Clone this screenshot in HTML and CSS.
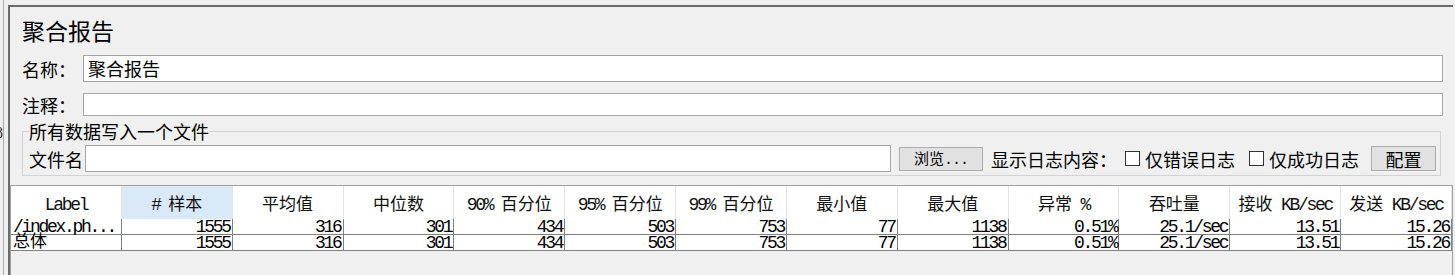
FILE: index.html
```html
<!DOCTYPE html>
<html lang="zh-CN">
<head>
<meta charset="utf-8">
<title>聚合报告</title>
<link rel="stylesheet" href="styles.css">
</head>
<body>
<div class="side"><span class="side-glyph">8</span></div>
<div class="panel">
  <div class="form">
    <div class="title">聚合报告</div>
    <div class="row row-name"><span class="lbl">名称：</span><div class="field field-tall">聚合报告</div></div>
    <div class="row row-comment"><span class="lbl">注释：</span><div class="field field-short"></div></div>
    <fieldset class="group">
      <legend>所有数据写入一个文件</legend>
      <div class="file-row">
        <span class="lbl-file">文件名</span>
        <div class="field file-input"></div>
        <button class="btn btn-browse">浏览<span class="dots">...</span></button>
        <span class="txt show-log">显示日志内容：</span>
        <span class="chk"></span><span class="txt chk-lbl">仅错误日志</span>
        <span class="chk chk2"></span><span class="txt chk-lbl">仅成功日志</span>
        <button class="btn btn-config">配置</button>
      </div>
    </fieldset>
  </div>
  <div class="table-pane">
    <div class="grid">
      <div class="h"><span class="lat">Label</span></div>
      <div class="h sel"><span class="lat"># </span>样本</div>
      <div class="h">平均值</div>
      <div class="h">中位数</div>
      <div class="h"><span class="lat">90% </span>百分位</div>
      <div class="h"><span class="lat">95% </span>百分位</div>
      <div class="h"><span class="lat">99% </span>百分位</div>
      <div class="h">最小值</div>
      <div class="h">最大值</div>
      <div class="h">异常<span class="lat"> %</span></div>
      <div class="h">吞吐量</div>
      <div class="h">接收<span class="lat"> KB/sec</span></div>
      <div class="h">发送<span class="lat"> KB/sec</span></div>

      <div class="d first">/index.ph...</div>
      <div class="d">1555</div>
      <div class="d">316</div>
      <div class="d">301</div>
      <div class="d">434</div>
      <div class="d">503</div>
      <div class="d">753</div>
      <div class="d">77</div>
      <div class="d">1138</div>
      <div class="d">0.51%</div>
      <div class="d">25.1/sec</div>
      <div class="d">13.51</div>
      <div class="d">15.26</div>

      <div class="d first cjk">总体</div>
      <div class="d">1555</div>
      <div class="d">316</div>
      <div class="d">301</div>
      <div class="d">434</div>
      <div class="d">503</div>
      <div class="d">753</div>
      <div class="d">77</div>
      <div class="d">1138</div>
      <div class="d">0.51%</div>
      <div class="d">25.1/sec</div>
      <div class="d">13.51</div>
      <div class="d">15.26</div>
    </div>
  </div>
</div>
</body>
</html>
```
FILE: styles.css
```css
* { box-sizing: border-box; }
html, body { margin: 0; padding: 0; }
body {
  width: 1455px;
  height: 275px;
  overflow: hidden;
  background: #f0f0f0;
  display: flex;
  align-items: stretch;
  font-family: "Noto Sans CJK SC", "Noto Sans", sans-serif;
  color: #000;
}
.side {
  flex: none;
  width: 4px;
  margin-right: 4px;
  border-right: 1px solid #a8a8a8;
  overflow: hidden;
  display: flex;
  justify-content: flex-end;
  align-items: flex-start;
}
.side-glyph {
  margin-top: 125px;
  font-family: "Liberation Serif", serif;
  font-size: 16px;
  line-height: 16px;
  color: #333;
}
.panel {
  flex: none;
  width: 1445px;
  margin-top: 5px;
  border-top: 2px solid #6b6b6b;
  border-left: 2px solid #6b6b6b;
  display: flex;
  flex-direction: column;
}
.form { padding: 0 10px 0 12px; }
.title {
  margin-top: 6px;
  height: 34px;
  line-height: 34px;
  font-size: 23px;
}
.row { display: flex; align-items: center; }
.row-name { margin-top: 8px; }
.row-comment { margin-top: 11px; }
.lbl {
  flex: none;
  width: 61px;
  font-size: 18px;
  line-height: 20px;
}
.field {
  background: #fff;
  border: 1px solid #a5a5a5;
}
.row .field { flex: 1; }
.field-tall {
  height: 27px;
  font-size: 18px;
  line-height: 24px;
  padding-left: 4px;
}
.field-short { height: 23px; }
.group {
  margin: 5px 2px 0 0;
  padding: 0 5px 3px 6px;
  border: 1px solid #d3d3d3;
  min-width: 0;
}
.group legend {
  padding: 0;
  font-size: 18px;
  line-height: 20px;
}
.file-row {
  display: flex;
  align-items: center;
  height: 27px;
  margin-top: 4px;
}
.lbl-file {
  flex: none;
  width: 56px;
  font-size: 18px;
  line-height: 20px;
}
.file-input { flex: none; width: 806px; height: 27px; }
.btn {
  flex: none;
  background: #e1e1e1;
  border: 1px solid #adadad;
  padding: 0;
  color: #000;
  font-family: "Noto Sans CJK SC", sans-serif;
}
.btn-browse {
  margin-left: 8px;
  width: 84px;
  height: 24px;
  font-size: 15px;
  line-height: 20px;
}
.dots { font-family: "Liberation Mono", monospace; letter-spacing: -1px; }
.txt { flex: none; font-size: 18px; line-height: 20px; white-space: nowrap; }
.show-log { margin-left: 8px; width: 126px; }
.chk {
  flex: none;
  width: 15px;
  height: 15px;
  margin-left: 8px;
  background: #fff;
  border: 1px solid #333;
}
.chk2 { margin-left: 14px; }
.chk-lbl { margin-left: 5px; width: 90px; }
.btn-config {
  margin-left: 12px;
  width: 65px;
  height: 25px;
  font-size: 18px;
  line-height: 22px;
}
.table-pane {
  flex: 1;
  margin-top: 9px;
  border-top: 1px solid #a0a0a0;
  border-left: 1px solid #a0a0a0;
  border-right: 1px solid #a0a0a0;
}
.grid {
  display: grid;
  grid-template-columns: repeat(13, 1fr);
}
.h {
  height: 33px;
  line-height: 33px;
  text-align: center;
  white-space: nowrap;
  background: #fff;
  border-right: 1px solid #e4e4e4;
  font-size: 17px;
  color: #111;
}
.h.sel { background: #d9e9f7; }
.lat {
  font-family: "Liberation Mono", monospace;
  font-size: 18px;
  letter-spacing: -2.3px;
}
.d {
  height: 16px;
  padding: 0 2px 0 2px;
  line-height: 16px;
  background: #fff;
  border-right: 1px solid #808080;
  border-bottom: 1px solid #808080;
  text-align: right;
  white-space: nowrap;
  font-family: "Liberation Mono", monospace;
  font-size: 18px;
  letter-spacing: -2.3px;
}
.d.first { text-align: left; }
.d.cjk {
  font-family: "Noto Sans CJK SC", sans-serif;
  font-size: 17px;
  letter-spacing: 0;
  line-height: 9px;
  padding-top: 0;
}
```
